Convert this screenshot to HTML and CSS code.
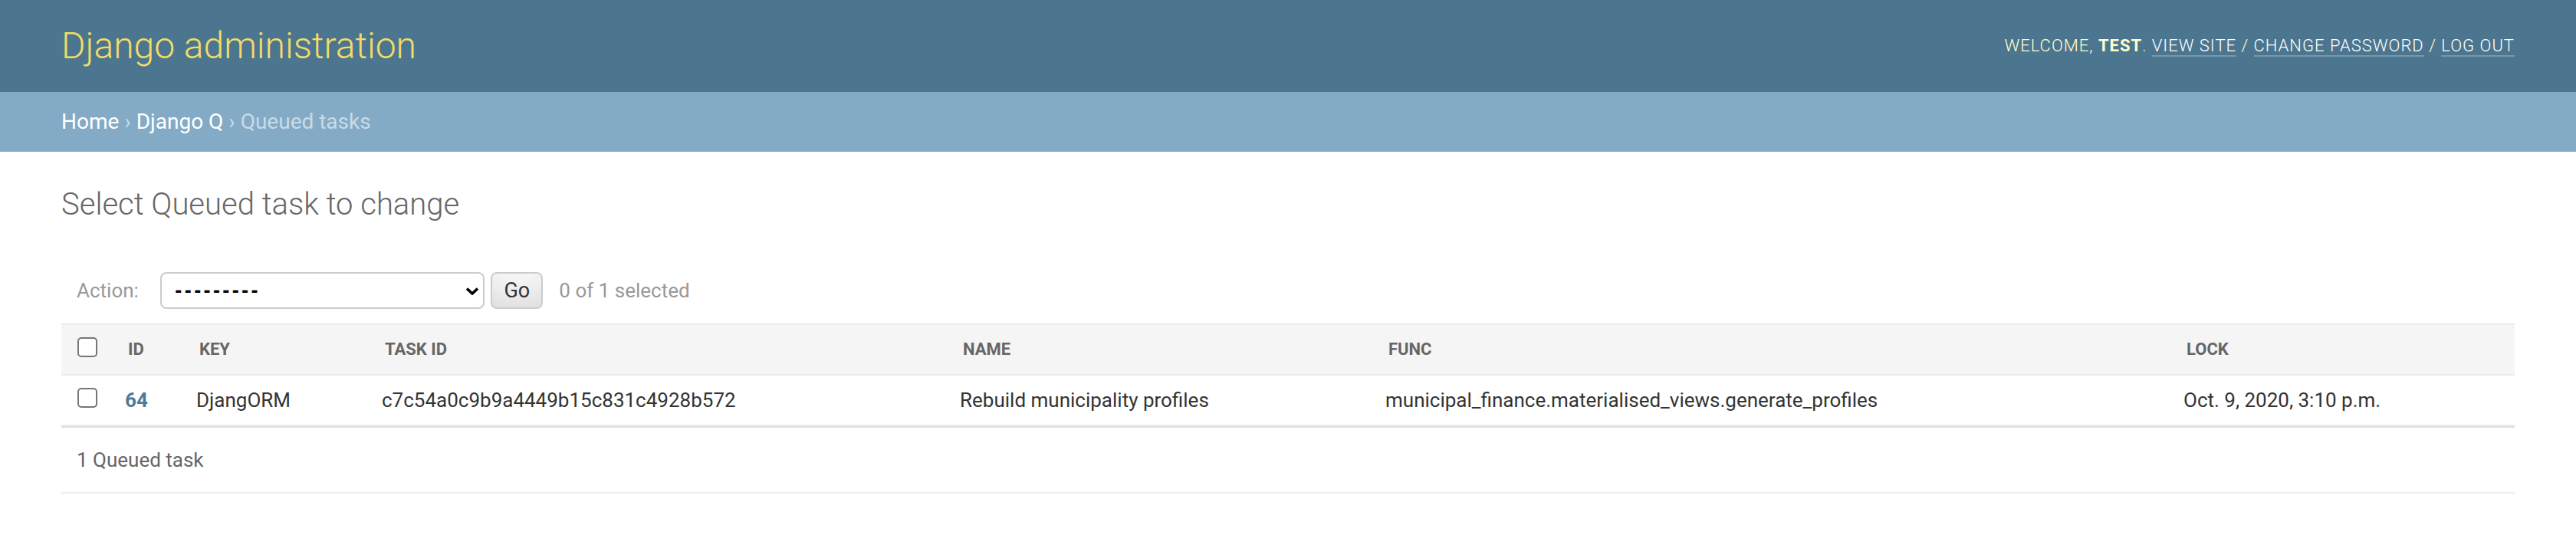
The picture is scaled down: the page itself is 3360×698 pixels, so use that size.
FILE: index.html
```html
<!DOCTYPE html>
<html lang="en">
<head>
<meta charset="utf-8">
<title>Select Queued task to change | Django site admin</title>
<link rel="stylesheet" href="styles.css">
</head>
<body>
<header class="header">
  <div class="branding"><h1 class="site-name">Django administration</h1></div>
  <div class="user-tools">Welcome, <strong class="user-name">test</strong>. <a class="tool-link" href="#">View site</a> / <a class="tool-link" href="#">Change password</a> / <a class="tool-link" href="#">Log out</a></div>
</header>
<div class="breadcrumbs"><a class="crumb-link" href="#">Home</a> › <a class="crumb-link" href="#">Django Q</a> › Queued tasks</div>
<main class="content">
  <h1 class="page-title">Select Queued task to change</h1>
  <form class="changelist-form">
    <div class="actions">
      <label class="action-label">Action: <span class="select-wrap"><select class="action-select"><option>---------</option></select><svg class="chevron" width="18" height="10" viewBox="0 0 18 10"><polyline points="2,1.5 9,8 16,1.5" fill="none" stroke="#000" stroke-width="3.6" stroke-linejoin="miter"/></svg></span></label><button class="go-button" type="button">Go</button><span class="action-counter">0 of 1 selected</span>
    </div>
    <table class="results">
      <colgroup>
        <col class="col-check"><col class="col-id"><col class="col-key"><col class="col-taskid"><col class="col-name"><col class="col-func"><col class="col-lock">
      </colgroup>
      <thead>
        <tr>
          <th class="head-cell head-check"><span class="head-text"><input class="check" type="checkbox"></span></th>
          <th class="head-cell"><span class="head-text">Id</span></th>
          <th class="head-cell"><span class="head-text">Key</span></th>
          <th class="head-cell"><span class="head-text">Task id</span></th>
          <th class="head-cell"><span class="head-text">Name</span></th>
          <th class="head-cell"><span class="head-text">Func</span></th>
          <th class="head-cell"><span class="head-text">Lock</span></th>
        </tr>
      </thead>
      <tbody>
        <tr>
          <td class="cell cell-check"><input class="check" type="checkbox"></td>
          <th class="cell cell-link"><a class="row-link" href="#">64</a></th>
          <td class="cell">DjangORM</td>
          <td class="cell">c7c54a0c9b9a4449b15c831c4928b572</td>
          <td class="cell">Rebuild municipality profiles</td>
          <td class="cell">municipal_finance.materialised_views.generate_profiles</td>
          <td class="cell">Oct. 9, 2020, 3:10 p.m.</td>
        </tr>
      </tbody>
    </table>
    <p class="paginator">1 Queued task</p>
  </form>
</main>
</body>
</html>
```
FILE: styles.css
```css
html, body {
  margin: 0;
  padding: 0;
}
body {
  font-family: Roboto, "Liberation Sans", "DejaVu Sans", sans-serif;
  font-size: 28px;
  color: #333;
  background: #fff;
}

/* header */
.header {
  height: 80px;
  padding: 20px 80px;
  background: #4c768f;
  color: #ffc;
  display: flex;
  justify-content: space-between;
  align-items: center;
  line-height: 80px;
}
.site-name {
  margin: 0 40px 0 0;
  padding: 0;
  font-size: 48px;
  font-weight: 300;
  color: #f3dc66;
  line-height: 80px;
}
.user-tools {
  font-size: 22px;
  font-weight: 300;
  letter-spacing: 1px;
  text-transform: uppercase;
  text-align: right;
  color: #ffc;
  line-height: 80px;
}
.user-name {
  font-weight: 700;
}
.tool-link {
  color: #fff;
  text-decoration: none;
  border-bottom: 2px solid rgba(255, 255, 255, 0.25);
}

/* breadcrumbs */
.breadcrumbs {
  background: #84abc5;
  padding: 20px 80px;
  font-size: 28px;
  line-height: 38px;
  color: #c7dbe8;
}
.crumb-link {
  color: #fff;
  text-decoration: none;
}

/* content */
.content {
  display: block;
  padding: 40px 80px;
}
.page-title {
  margin: 0 0 40px;
  font-size: 40px;
  font-weight: 300;
  line-height: 58px;
  color: #666;
}
.changelist-form {
  margin: 0;
}
.actions {
  padding: 19px 20px 19px;
  line-height: 48px;
  height: 48px;
  color: #999;
  font-size: 26px;
}
.action-label {
  font-size: 26px;
}
.select-wrap {
  position: relative;
  display: inline-block;
  vertical-align: top;
  margin-left: 22px;
}
.action-select {
  appearance: none;
  -webkit-appearance: none;
  display: block;
  box-sizing: border-box;
  width: 423px;
  height: 48px;
  margin: 0;
  padding: 0 0 0 17px;
  border: 2px solid #ccc;
  border-radius: 8px;
  background: #fff;
  color: #000;
  font-family: "Liberation Sans", Arial, sans-serif;
  font-size: 27px;
  letter-spacing: 3.4px;
  font-weight: 700;
}
.chevron {
  position: absolute;
  right: 7px;
  top: 20px;
}
.go-button {
  box-sizing: border-box;
  vertical-align: top;
  height: 48px;
  width: 68px;
  margin: 0 0 0 8px;
  padding: 0;
  border: 2px solid #ccc;
  border-radius: 8px;
  background: #f6f6f6;
  box-shadow: inset 0 -30px 40px -20px rgba(0, 0, 0, 0.12);
  color: #333;
  font-family: Roboto, "Liberation Sans", sans-serif;
  font-size: 27px;
  line-height: 1;
}
.action-counter {
  font-size: 26px;
  margin: 0 13px 0 21px;
  color: #999;
}

/* table */
.results {
  width: 100%;
  table-layout: fixed;
  border-collapse: collapse;
}
.col-check { width: 67px; }
.col-id { width: 93px; }
.col-key { width: 242px; }
.col-taskid { width: 754px; }
.col-name { width: 555px; }
.col-func { width: 1041px; }
.col-lock { width: 448px; }

.head-cell {
  padding: 0;
  background: #f5f5f5;
  border-top: 2px solid #ececec;
  border-bottom: 2px solid #ececec;
  text-align: left;
  text-transform: uppercase;
  font-size: 22px;
  font-weight: 700;
  color: #666;
  white-space: nowrap;
  vertical-align: middle;
}
.head-text {
  display: block;
  padding: 16px 20px;
  line-height: 32px;
}
.head-check {
  text-align: center;
}
.head-check .head-text {
  padding: 16px 0;
}
.check {
  appearance: none;
  -webkit-appearance: none;
  box-sizing: border-box;
  width: 26px;
  height: 26px;
  margin: 0;
  border: 2px solid #767676;
  border-radius: 5px;
  background: #fff;
  vertical-align: top;
}
.cell {
  padding: 16px;
  font-size: 26px;
  line-height: 32px;
  color: #333;
  text-align: left;
  vertical-align: top;
  font-weight: 400;
  border-bottom: 2px solid #eee;
  white-space: nowrap;
}
.cell-check {
  padding: 16px 0;
  text-align: center;
}
.cell-link {
  font-weight: 700;
}
.row-link {
  color: #4b7b98;
  text-decoration: none;
}
.paginator {
  margin: 0;
  padding: 20px;
  font-size: 26px;
  line-height: 44px;
  color: #666;
  border-top: 2px solid #ddd;
  border-bottom: 2px solid #eee;
}
```
